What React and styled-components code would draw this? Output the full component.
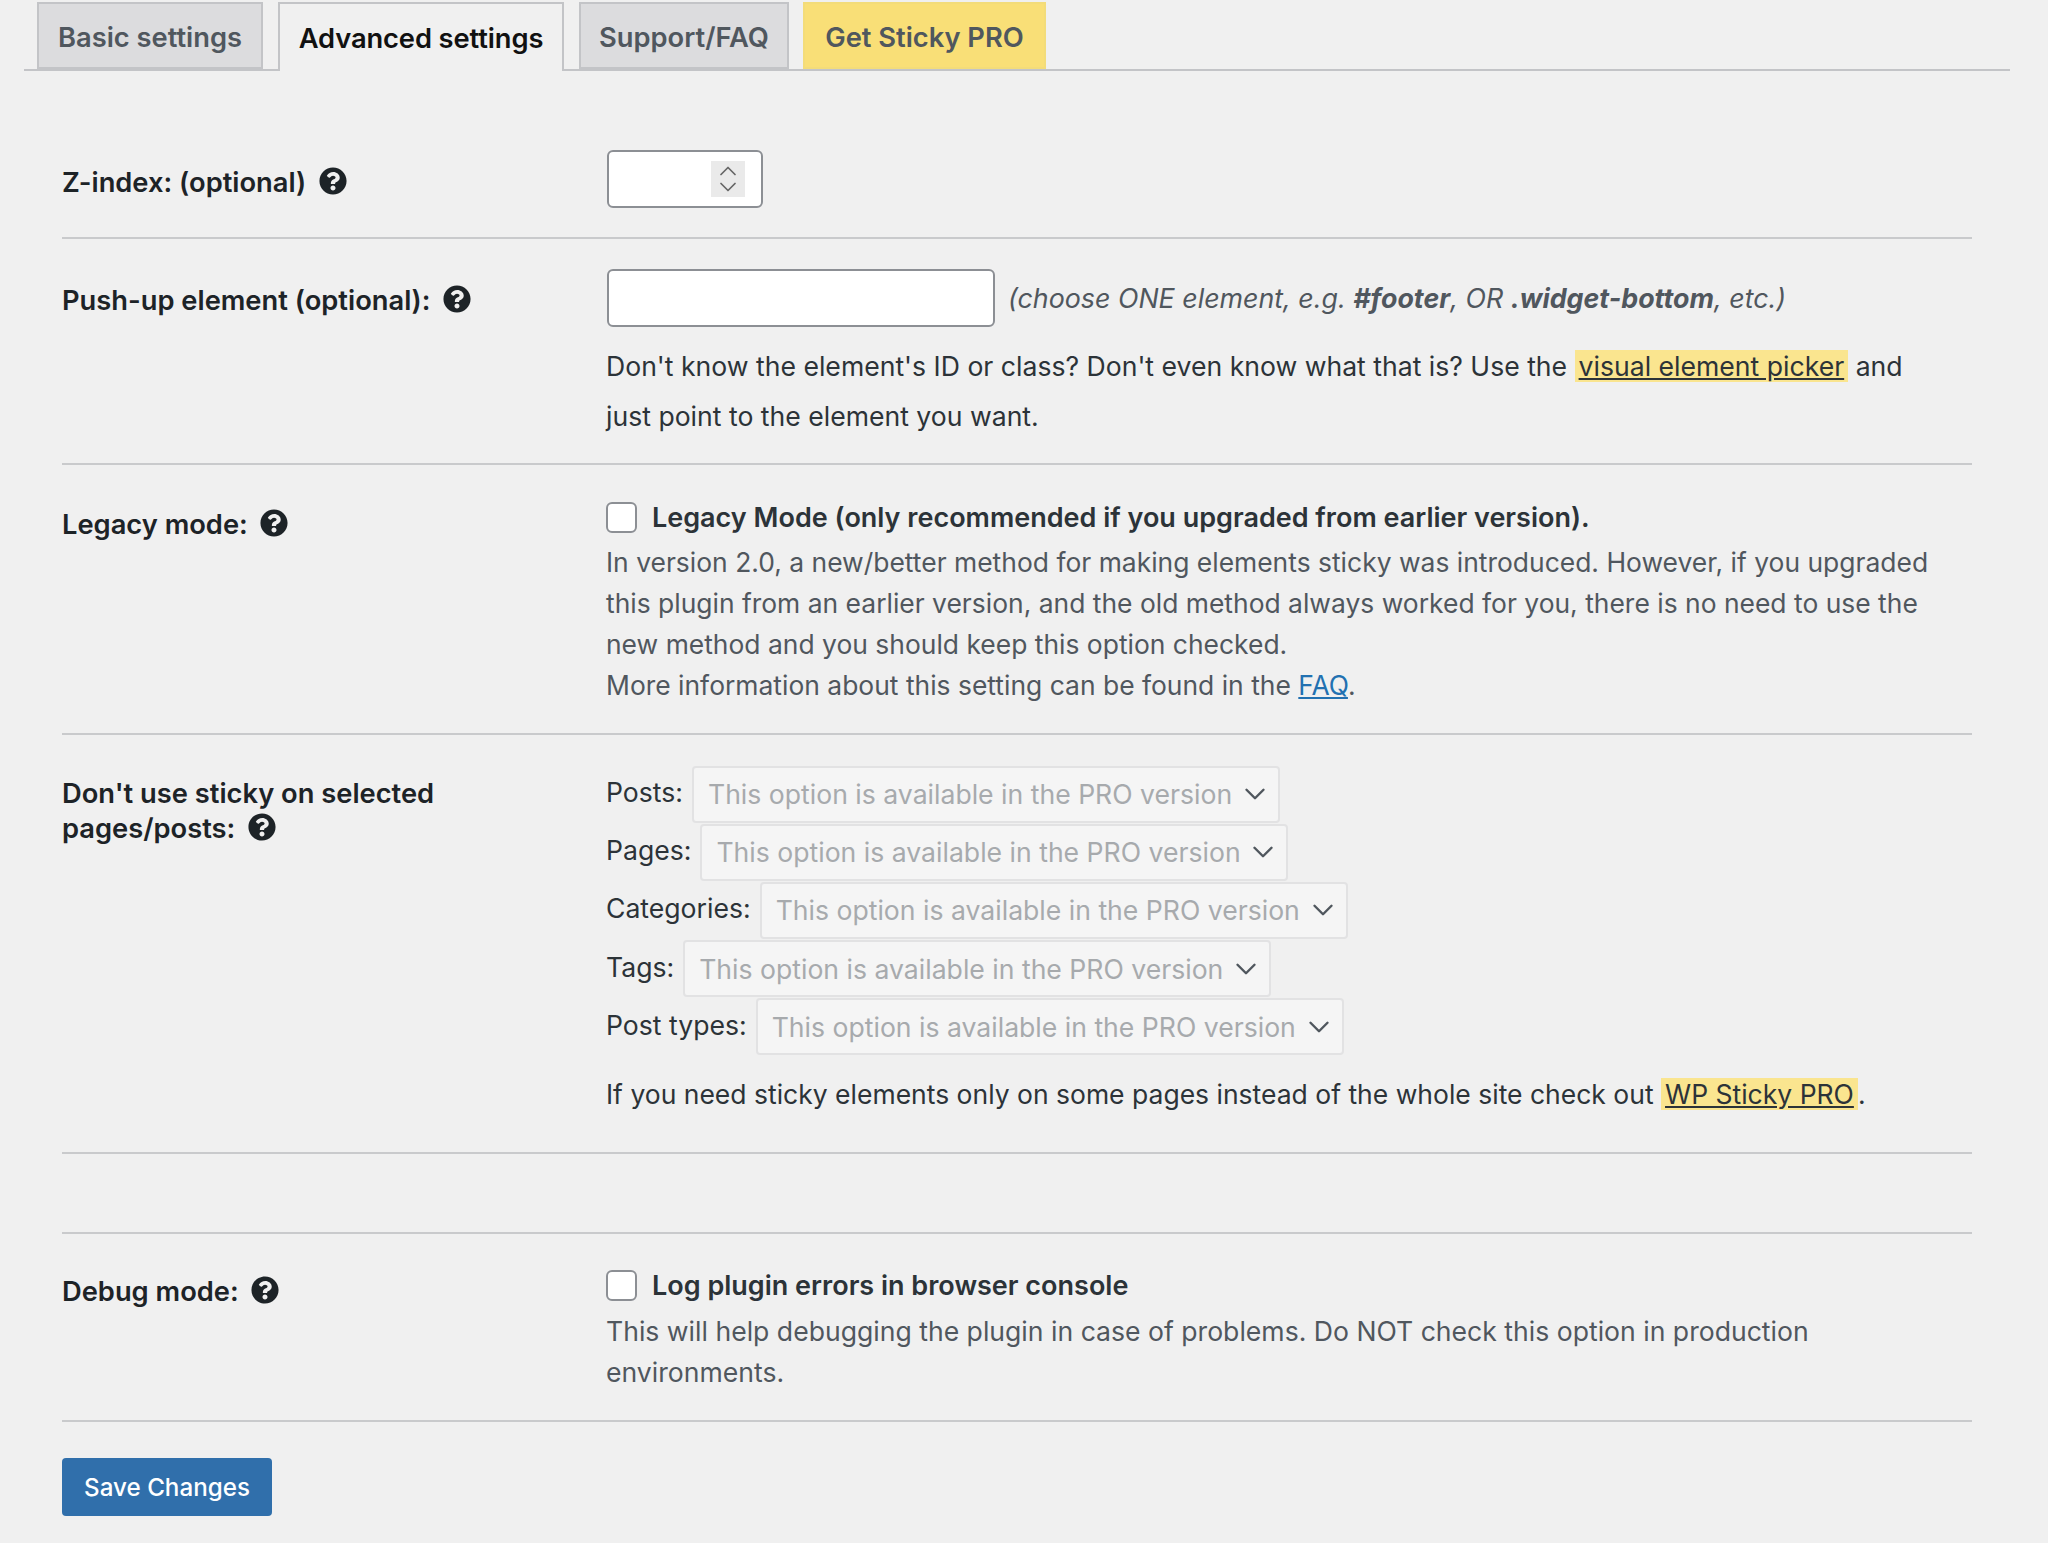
import React from "react";
import styled, { createGlobalStyle } from "styled-components";
import { FaQuestionCircle } from "react-icons/fa";
import { ChevronDown, ChevronUp } from "lucide-react";

const GlobalStyle = createGlobalStyle`
  body {
    margin: 0;
    background: #f0f0f0;
    color: #2c3338;
    font-family: Inter, "Liberation Sans", sans-serif;
    font-size: 26.6px;
  }
`;

const Page = styled.div`
  width: 2048px;
  height: 1543px;
  overflow: hidden;
  padding: 0 38px 0 24px;
  box-sizing: border-box;
`;

const TabBar = styled.nav`
  display: flex;
  align-items: flex-end;
  gap: 15px;
  height: 71px;
  padding: 2px 0 0 13px;
  border-bottom: 2px solid #c3c4c7;
  box-sizing: border-box;
`;

const Tab = styled.a`
  display: flex;
  align-items: center;
  justify-content: center;
  width: ${(p) => p.$width}px;
  height: ${(p) => (p.$active ? 69 : 67)}px;
  margin-bottom: ${(p) => (p.$active ? -2 : 0)}px;
  margin-left: ${(p) => (p.$pro ? -1 : 0)}px;
  padding-top: ${(p) => (p.$active ? 1 : 3)}px;
  box-sizing: border-box;
  border: 2px solid ${(p) => (p.$pro ? "#f3dc7a" : "#c3c4c7")};
  border-bottom: ${(p) => (p.$active ? "none" : undefined)};
  background: ${(p) => (p.$active ? "#f0f0f0" : p.$pro ? "#f9df77" : "#dcdcde")};
  color: ${(p) => (p.$active ? "#111" : "#50575e")};
  font-size: 27.3px;
  font-weight: 600;
  letter-spacing: ${(p) => (p.$active ? -0.1 : 0)}px;
`;

const Form = styled.div`
  padding: 0 38px 0 38px;
`;

const Row = styled.section`
  display: flex;
  min-height: ${(p) => p.$height}px;
  box-sizing: border-box;
  padding-top: ${(p) => p.$top}px;
  border-bottom: 2px solid #c9cacc;
`;

const LabelCol = styled.div`
  width: 544px;
  flex: none;
  padding-top: ${(p) => p.$top || 0}px;
  font-size: 27.3px;
  font-weight: 600;
  color: #1d2327;
  line-height: 35px;
`;

const HelpIcon = styled(FaQuestionCircle)`
  width: 28px;
  height: 28px;
  margin-left: 12.5px;
  vertical-align: -3px;
  color: #1d2327;
`;

const ValueCol = styled.div`
  flex: 1;
  min-width: 0;
`;

const NumberBox = styled.div`
  display: flex;
  align-items: center;
  justify-content: flex-end;
  width: 156px;
  height: 58px;
  margin-left: 1px;
  padding-right: 16px;
  box-sizing: border-box;
  background: #fff;
  border: 2px solid #8c8f94;
  border-radius: 6px;
`;

const Spinner = styled.div`
  display: flex;
  flex-direction: column;
  align-items: center;
  justify-content: center;
  width: 34px;
  height: 36px;
  background: #eaeaea;
  color: #666;

  svg {
    margin: -6px 0;
  }
`;

const PlainInput = styled.input`
  width: 388px;
  height: 58px;
  margin: 0 13px 0 1px;
  box-sizing: border-box;
  background: #fff;
  border: 2px solid #8c8f94;
  border-radius: 6px;
`;

const InputLine = styled.div`
  display: flex;
  align-items: center;
`;

const Hint = styled.span`
  font-size: 26.8px;
  font-style: italic;
  color: #50575e;
  white-space: nowrap;
`;

const Para = styled.p`
  margin: ${(p) => p.$top || 0}px 0 0;
  color: ${(p) => p.$color || "#2c3338"};
  font-size: ${(p) => p.$size || 26.6}px;
  line-height: ${(p) => p.$line || 49}px;
  white-space: nowrap;
`;

const Marked = styled.a`
  background: #fae58f;
  color: #2c3338;
  padding: 0 4px;
  text-decoration: underline;
`;

const BlueLink = styled.a`
  color: #2271b1;
  text-decoration: underline;
`;

const CheckLine = styled.label`
  display: flex;
  align-items: center;
  gap: 15px;
  height: 35px;
  font-size: 27px;
  font-weight: 600;
  color: #2c3338;
  white-space: nowrap;
`;

const CheckBox = styled.input.attrs({ type: "checkbox" })`
  appearance: none;
  flex: none;
  width: 31px;
  height: 31px;
  margin: 0;
  background: #fff;
  border: 2px solid #8c8f94;
  border-radius: 6px;
`;

const SelectLine = styled.div`
  display: flex;
  align-items: center;
  height: 58.2px;
`;

const SelectLabel = styled.span`
  line-height: 50px;
  margin-right: 9px;
  padding-bottom: 4px;
`;

const FakeSelect = styled.div`
  display: flex;
  align-items: center;
  justify-content: space-between;
  width: 588px;
  height: 57px;
  padding: 0 6px 0 14px;
  box-sizing: border-box;
  background: #f5f5f5;
  border: 2px solid #e2e2e3;
  border-radius: 4px;
  color: #a7aaad;
  white-space: nowrap;
`;

const SaveButton = styled.button`
  display: block;
  width: 210px;
  height: 58px;
  margin-top: 36px;
  background: #306fab;
  border: none;
  border-radius: 4px;
  color: #fff;
  font-family: inherit;
  font-size: 24.2px;
  font-weight: 500;
`;

const selectRows = ["Posts:", "Pages:", "Categories:", "Tags:", "Post types:"];

const App = () => {
  return (
    <Page>
      <GlobalStyle />
      <TabBar>
        <Tab $width={226}>Basic settings</Tab>
        <Tab $width={286} $active>
          Advanced settings
        </Tab>
        <Tab $width={210}>Support/FAQ</Tab>
        <Tab $width={243} $pro>
          Get Sticky PRO
        </Tab>
      </TabBar>
      <Form>
        <Row $height={168} $top={79}>
          <LabelCol $top={15}>
            Z-index: (optional)
            <HelpIcon />
          </LabelCol>
          <ValueCol>
            <NumberBox>
              <Spinner>
                <ChevronUp size={28} strokeWidth={1.5} />
                <ChevronDown size={28} strokeWidth={1.5} />
              </Spinner>
            </NumberBox>
          </ValueCol>
        </Row>
        <Row $height={226} $top={30}>
          <LabelCol $top={14}>
            Push-up element (optional):
            <HelpIcon />
          </LabelCol>
          <ValueCol>
            <InputLine>
              <PlainInput />
              <Hint>
                (choose ONE element, e.g. <b>#footer</b>, OR <b>.widget-bottom</b>, etc.)
              </Hint>
            </InputLine>
            <Para $top={14} $line={50}>
              Don't know the element's ID or class? Don't even know what that is? Use the{" "}
              <Marked>visual element picker</Marked> and
              <br />
              just point to the element you want.
            </Para>
          </ValueCol>
        </Row>
        <Row $height={270} $top={35}>
          <LabelCol $top={7}>
            Legacy mode:
            <HelpIcon />
          </LabelCol>
          <ValueCol>
            <CheckLine>
              <CheckBox />
              Legacy Mode (only recommended if you upgraded from earlier version).
            </CheckLine>
            <Para $color="#50575e" $line={41} $top={7} $size={26.45}>
              In version 2.0, a new/better method for making elements sticky was introduced. However, if you upgraded
              <br />
              this plugin from an earlier version, and the old method always worked for you, there is no need to use the
              <br />
              new method and you should keep this option checked.
              <br />
              More information about this setting can be found in the <BlueLink>FAQ</BlueLink>.
            </Para>
          </ValueCol>
        </Row>
        <Row $height={419} $top={30}>
          <LabelCol $top={11}>
            Don't use sticky on selected
            <br />
            pages/posts:
            <HelpIcon />
          </LabelCol>
          <ValueCol>
            {selectRows.map((name) => (
              <SelectLine key={name}>
                <SelectLabel>{name}</SelectLabel>
                <FakeSelect>
                  This option is available in the PRO version
                  <ChevronDown size={34} strokeWidth={1.7} color="#50575e" />
                </FakeSelect>
              </SelectLine>
            ))}
            <Para $top={14} $size={26.5}>
              If you need sticky elements only on some pages instead of the whole site check out{" "}
              <Marked>WP Sticky PRO</Marked>.
            </Para>
          </ValueCol>
        </Row>
        <Row $height={80} />
        <Row $height={188} $top={34}>
          <LabelCol $top={6}>
            Debug mode:
            <HelpIcon />
          </LabelCol>
          <ValueCol>
            <CheckLine>
              <CheckBox />
              Log plugin errors in browser console
            </CheckLine>
            <Para $color="#50575e" $line={41} $top={8}>
              This will help debugging the plugin in case of problems. Do NOT check this option in production
              <br />
              environments.
            </Para>
          </ValueCol>
        </Row>
        <SaveButton>Save Changes</SaveButton>
      </Form>
    </Page>
  );
};

export default App;
